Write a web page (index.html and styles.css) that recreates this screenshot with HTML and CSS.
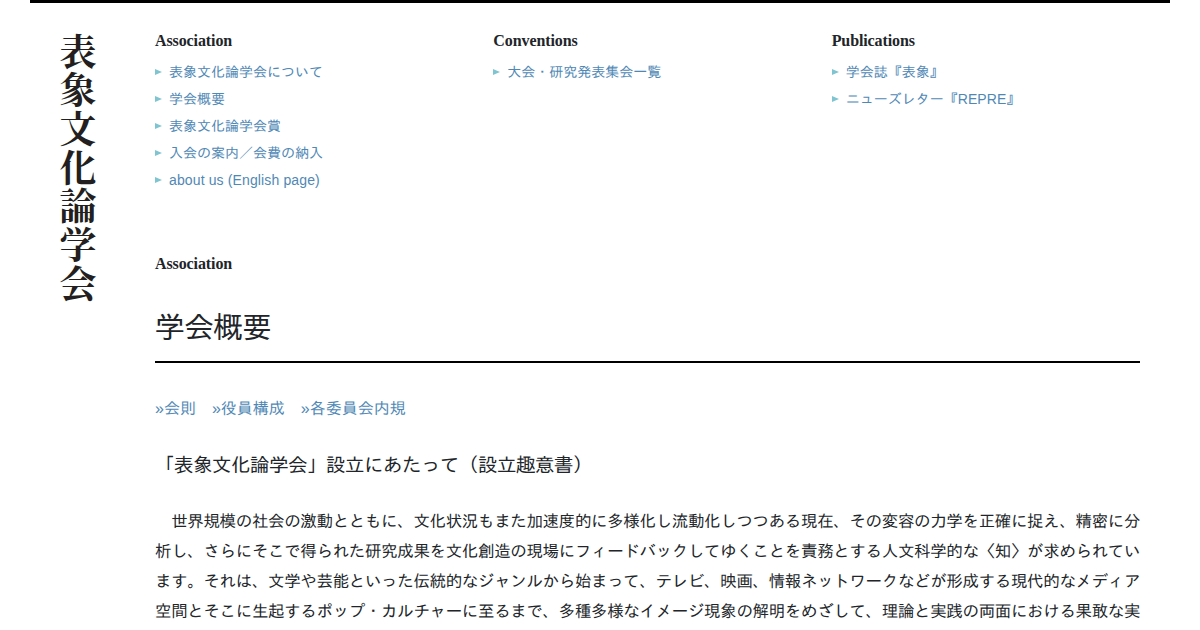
FILE: index.html
```
<!DOCTYPE html>
<html lang="ja">
  <head>
    <meta charset="UTF-8" />
    <meta name="viewport" content="width=device-width, initial-scale=1.0" />
    <title>学会概要 | 表象文化論学会</title>
    <link rel="stylesheet" href="styles.css">
  </head>
  <body>
    <div class="page">
      <h1 class="logo">表象文化論学会</h1>
      <div class="main">
        <nav class="menu">
          <div class="menu-col">
            <h2 class="label">Association</h2>
            <ul>
              <li><a href="#">表象文化論学会について</a></li>
              <li><a href="#">学会概要</a></li>
              <li><a href="#">表象文化論学会賞</a></li>
              <li><a href="#">入会の案内／会費の納入</a></li>
              <li><a class="en" href="#">about us (English page)</a></li>
            </ul>
          </div>
          <div class="menu-col">
            <h2 class="label">Conventions</h2>
            <ul>
              <li><a href="#">大会・研究発表集会一覧</a></li>
            </ul>
          </div>
          <div class="menu-col">
            <h2 class="label">Publications</h2>
            <ul>
              <li><a href="#">学会誌『表象』</a></li>
              <li><a href="#">ニューズレター『<span class="en">REPRE</span>』</a></li>
            </ul>
          </div>
        </nav>
        <div class="content">
          <div class="label">Association</div>
          <h2 class="title">学会概要</h2>
          <p class="anchors"><a href="#">»会則</a>　<a href="#">»役員構成</a>　<a href="#">»各委員会内規</a></p>
          <h3 class="sub-title">「表象文化論学会」設立にあたって（設立趣意書）</h3>
          <p class="text">　世界規模の社会の激動とともに、文化状況もまた加速度的に多様化し流動化しつつある現在、その変容の力学を正確に捉え、精密に分析し、さらにそこで得られた研究成果を文化創造の現場にフィードバックしてゆくことを責務とする人文科学的な〈知〉が求められています。それは、文学や芸能といった伝統的なジャンルから始まって、テレビ、映画、情報ネットワークなどが形成する現代的なメディア空間とそこに生起するポップ・カルチャーに至るまで、多種多様なイメージ現象の解明をめざして、理論と実践の両面における果敢な実</p>
        </div>
      </div>
    </div>
  </body>
</html>
```
FILE: styles.css
```
* {
  box-sizing: border-box;
}
body {
  margin: 0;
  font-family: "Liberation Sans", "IPAGothic", "Noto Sans CJK JP", sans-serif;
  font-size: 16px;
  font-weight: 300;
  color: #212529;
  background: white;
  text-spacing-trim: space-all;
  overflow: hidden;
}
h1, h2, h3, p, ul {
  margin: 0;
  padding: 0;
  font-weight: 300;
}
a {
  color: #4f88b5;
  text-decoration: none;
}
.page {
  display: flex;
  margin: 0 30px;
  padding: 29px 30px 0;
  border-top: 3px solid black;
}
.logo {
  width: 36px;
  margin: 1px 59px 0 0;
  font-family: "Noto Serif CJK JP", "Noto Sans CJK JP", serif;
  font-size: 37px;
  font-weight: 700;
  line-height: 36px;
  letter-spacing: 1.7px;
  writing-mode: vertical-rl;
  color: #231f20;
}
.main {
  flex: 1;
}
.menu {
  display: grid;
  grid-template-columns: repeat(3, 1fr);
  gap: 30px;
}
.label {
  font-family: "Liberation Serif", serif;
  font-size: 16px;
  font-weight: 700;
  line-height: 18px;
  letter-spacing: -0.1px;
}
.menu ul {
  list-style: none;
  margin-top: 9px;
}
.menu li {
  display: flex;
  align-items: center;
  height: 27px;
  font-size: 14px;
  line-height: 27px;
}
.menu li::before {
  content: "";
  margin: 0 7px 1px 0;
  border-left: 7px solid #7fc4d1;
  border-top: 3px solid transparent;
  border-bottom: 3px solid transparent;
}
.en {
  letter-spacing: 0.13px;
}
.content {
  margin-top: 61px;
}
.title {
  margin-top: 33px;
  padding-bottom: 12px;
  border-bottom: 2px solid black;
  font-size: 30px;
  line-height: 43px;
  letter-spacing: -1px;
}
.anchors {
  margin-top: 31px;
  line-height: 30px;
}
.sub-title {
  margin-top: 26px;
  font-size: 19.6px;
  line-height: 30px;
  letter-spacing: -0.6px;
}
.text {
  margin-top: 26px;
  font-size: 16.5px;
  line-height: 30px;
  letter-spacing: -0.5px;
  text-align: justify;
  text-align-last: justify;
}
```
